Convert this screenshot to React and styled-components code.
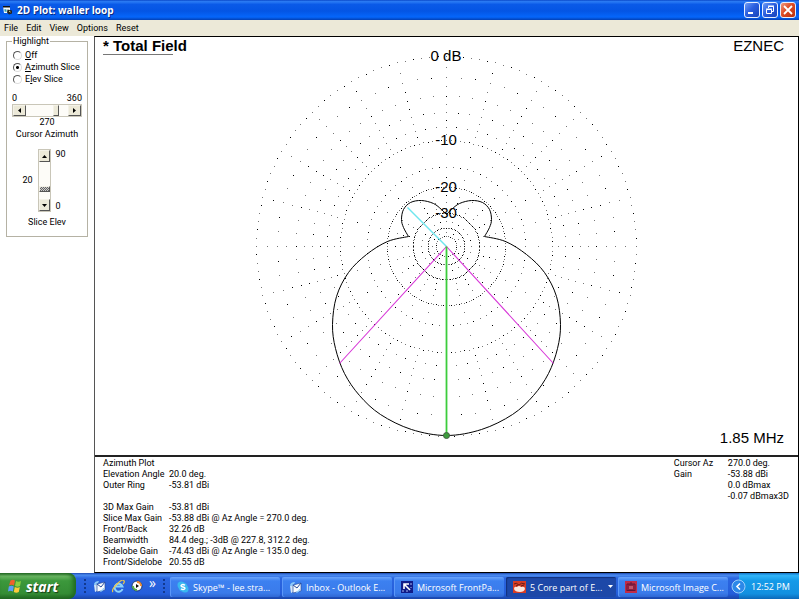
import React, { useState } from "react";
import styled, { createGlobalStyle, css } from "styled-components";

const GlobalStyle = createGlobalStyle`
  * {
    box-sizing: border-box;
  }
  body {
    margin: 0;
    background: #fff;
    color: #000;
    font-family: Roboto, "Liberation Sans", sans-serif;
    font-size: 9px;
    line-height: 11px;
  }
  button, input {
    font: inherit;
    color: inherit;
    margin: 0;
  }
`;

const Page = styled.div`
  display: flex;
  flex-direction: column;
  min-height: 100vh;
  padding: 0 1px 1px 0;
`;

/* ---------- window ---------- */

const TitleBar = styled.header`
  display: flex;
  align-items: center;
  gap: 4px;
  height: 20px;
  padding: 0 3px 0 2px;
  background: linear-gradient(#0a48c8 0%, #2b7cf5 8%, #0a5ae8 22%, #0455e4 55%, #0566fb 85%, #0340b4 100%);
`;

const Title = styled.h1`
  flex: 1;
  margin: 0;
  color: #fff;
  font-family: "Open Sans", sans-serif;
  font-size: 10px;
  font-weight: 700;
  text-shadow: 1px 1px 0 #0a2a80;
`;

const WindowButtons = styled.div`
  display: flex;
  gap: 2px;
`;

const WindowButton = styled.button`
  display: flex;
  width: 16px;
  height: 16px;
  padding: 0;
  border: 1px solid #e6efff;
  border-radius: 3px;
  background: ${(props) =>
    props.$close
      ? "linear-gradient(135deg, #f09a80, #dd4a24 45%, #b8300c)"
      : "linear-gradient(135deg, #6f9cf5, #2a5fe0 45%, #1743b8)"};
`;

const MenuBar = styled.nav`
  display: flex;
  gap: 8px;
  height: 16px;
  padding: 2px 4px;
  background: #ece9d8;
`;

const MenuItem = styled.button`
  padding: 0;
  border: 0;
  background: none;
`;

const Main = styled.main`
  flex: 1;
  display: flex;
`;

/* ---------- side panel ---------- */

const Side = styled.aside`
  width: 94px;
  padding: 0 6px;
`;

const Group = styled.fieldset`
  display: flex;
  flex-direction: column;
  min-width: 0;
  margin: 0;
  padding: 2px 5px 7px;
  border: 1px solid #b5b2a4;
`;

const Legend = styled.legend`
  padding: 0 1px;
`;

const RadioLabel = styled.label`
  display: flex;
  align-items: center;
  gap: 3px;
  height: 12px;
  padding-left: 1px;
`;

const Radio = styled.input`
  appearance: none;
  width: 9px;
  height: 9px;
  border: 1px solid;
  border-color: #555 #ddd #ddd #555;
  border-radius: 50%;
  background: #fff;
  &:checked {
    background: radial-gradient(#000 0 1px, #fff 2px);
  }
`;

const Ends = styled.div`
  display: flex;
  justify-content: space-between;
  margin-top: 8px;
`;

const Caption = styled.label`
  margin-bottom: 1px;
  text-align: center;
`;

const raised = css`
  border: 1px solid;
  border-color: #f4f2e8 #555 #555 #f4f2e8;
  background: #ece9d8;
`;

const ScrollBar = styled.div`
  display: flex;
  flex-direction: ${(props) => (props.$vertical ? "column" : "row")};
  width: ${(props) => (props.$vertical ? "13px" : "100%")};
  height: ${(props) => (props.$vertical ? "63px" : "13px")};
  border: 1px solid #c9c6b8;
`;

const ArrowButton = styled.button`
  ${raised}
  display: flex;
  align-items: center;
  justify-content: center;
  flex: none;
  width: ${(props) => (props.$vertical ? "100%" : "13px")};
  height: ${(props) => (props.$vertical ? "12px" : "100%")};
  padding: 0;
`;

const Range = styled.input`
  appearance: none;
  flex: 1;
  min-width: 0;
  min-height: 0;
  width: 100%;
  height: 100%;
  background: #fdfcf8;
  ${(props) =>
    props.$vertical &&
    css`
      writing-mode: vertical-lr;
      direction: rtl;
    `}
  &::-webkit-slider-runnable-track {
    width: 100%;
    height: 100%;
  }
  &::-webkit-slider-thumb {
    appearance: none;
    ${raised}
    width: ${(props) => (props.$vertical ? "11px" : "6px")};
    height: ${(props) => (props.$vertical ? "6px" : "11px")};
    ${(props) =>
      props.$vertical && "background: repeating-conic-gradient(#666 0 25%, #ccc 0 50%) 0 0 / 2px 2px;"}
  }
`;

const Elevation = styled.div`
  display: grid;
  grid-template-columns: 1fr 13px 1fr;
  column-gap: 5px;
  margin: 8px 0 5px;
  padding-right: 6px;
`;

const Current = styled.output`
  align-self: center;
  text-align: right;
`;

const Limits = styled.div`
  display: flex;
  flex-direction: column;
  justify-content: space-between;
`;

/* ---------- plot ---------- */

const View = styled.section`
  flex: 1;
  display: flex;
  flex-direction: column;
  border: 1px solid #000;
  border-left-color: #555;
`;

const Plot = styled.div`
  flex: 1;
  display: grid;
  grid-template-columns: 1fr 385px 1fr;
  align-items: center;
  font-family: "Liberation Sans", sans-serif;
  font-size: 15px;
  line-height: 17px;
`;

const PlotSide = styled.div`
  display: flex;
  flex-direction: column;
  justify-content: space-between;
  align-self: stretch;
  padding: 0 14px 9px 8px;
  text-align: ${(props) => props.$align};
  white-space: nowrap;
`;

const TraceName = styled.h2`
  width: 70px;
  margin: 0;
  border-bottom: 1px solid #777;
  font-size: 15px;
`;

const Info = styled.section`
  display: flex;
  justify-content: space-between;
  padding: 1px 9px 4px 8px;
  border-top: 2px solid #222;
`;

const InfoTable = styled.table`
  align-self: flex-start;
  border-collapse: collapse;
  th, td {
    height: 11px;
    padding: 0;
    font-weight: 400;
    text-align: left;
    white-space: nowrap;
  }
  th {
    width: ${(props) => props.$label};
  }
`;

/* ---------- taskbar ---------- */

const Taskbar = styled.footer`
  display: flex;
  height: 26px;
  color: #fff;
  background: linear-gradient(#1c48b0 0%, #4b8cf0 8%, #2b66e0 20%, #245edb 80%, #1a45a8 100%);
  font-family: "Open Sans", sans-serif;
`;

const Start = styled.button`
  display: flex;
  align-items: center;
  gap: 4px;
  width: 76px;
  padding: 0 0 0 8px;
  border: 0;
  border-radius: 0 8px 8px 0;
  background: linear-gradient(#2a6a2a, #6cb864 12%, #3c983c 30%, #348c34 80%, #226422);
  box-shadow: inset -3px 0 4px #1f6a20;
  font-size: 14px;
  font-style: italic;
  font-weight: 700;
  text-shadow: 1px 1px 1px #163c16;
`;

const QuickLaunch = styled.div`
  display: flex;
  align-items: center;
  gap: 6px;
  width: 94px;
  padding-left: 7px;
`;

const Grip = styled.span`
  width: 4px;
  height: 17px;
  background: radial-gradient(#12398f 1px, transparent 1px) 0 0 / 4px 4px;
`;

const QuickButton = styled.button`
  display: flex;
  padding: 0;
  border: 0;
  background: none;
`;

const MoreButton = styled(QuickButton)`
  padding-bottom: 7px;
  font-size: 14px;
`;

const Tasks = styled.div`
  flex: 1;
  display: flex;
  gap: 2px;
  min-width: 0;
  padding: 4px 3px 2px 0;
`;

const Task = styled.button`
  flex: 1;
  display: flex;
  align-items: center;
  gap: 4px;
  min-width: 0;
  padding: 0 3px 0 7px;
  border: 0;
  border-radius: 2px;
  background: ${(props) =>
    props.$active ? "#1d48a8" : "linear-gradient(#6aa4fa, #3c80f0 20%, #3a7bea 80%, #2f68d4)"};
  box-shadow: ${(props) => (props.$active ? "inset 1px 1px 1px #12307c" : "inset 1px 0 #5c98f8")};
  white-space: nowrap;
  svg {
    flex: none;
  }
  span {
    flex: 1;
    text-align: left;
  }
`;

const Tray = styled.div`
  display: flex;
  align-items: center;
  gap: 5px;
  width: 68px;
  background: linear-gradient(#1474c8, #30b4f8 10%, #149ae8 30%, #1290e0 80%, #0c68b8) 8px 0 no-repeat;
`;

const TrayToggle = styled.button`
  display: flex;
  padding: 0;
  border: 0;
  border-radius: 50%;
  background: none;
`;

const CENTER = 192;
const RADIUS = 190;

// ARRL log scale
const ringRadius = (db) => RADIUS * Math.pow(0.89, db / 2);

const rings = [
  ...[0, 10, 20, 30].map((db) => ({ db, step: 2.5 })),
  ...[2, 4, 6, 8, 15, 40].map((db) => ({ db, step: 5 })),
  ...[1, 3, 5, 7, 9, 12.5, 17.5, 22.5, 25, 27.5, 35].map((db) => ({ db, step: 15 })),
  { db: 50, step: 12 },
  { db: 45, step: 30 },
];

const dots = rings.flatMap(({ db, step }) => {
  const r = ringRadius(db);
  return Array.from({ length: 360 / step }, (_, i) => {
    const a = (i * step * Math.PI) / 180;
    return {
      x: Math.round(CENTER + r * Math.sin(a)),
      y: Math.round(CENTER - r * Math.cos(a)),
      fill: (i * 7 + Math.round(r)) % 3 ? "#777" : "#000",
    };
  });
});

// right half of the pattern, as offsets from the centre
const backLobe = [
  [0, -32], [5, -37], [13, -43], [25, -46], [36, -44], [43, -37], [45, -27], [43, -19], [38, -10],
];
const mainLobe = [
  [38, -10], [59, -5], [80, 8], [98, 26], [110, 50], [114, 78], [111, 102], [102, 127],
  [87, 149], [66, 168], [35, 183],
];

const mirror = (points) => points.map(([x, y]) => [-x, y]);

const spline = (points) =>
  `M${points[0].join(" ")}` +
  points
    .slice(1)
    .map((p, i) => {
      const a = points[i];
      const before = points[i - 1] || a;
      const after = points[i + 2] || p;
      return `C${a[0] + (p[0] - before[0]) / 6} ${a[1] + (p[1] - before[1]) / 6} ${
        p[0] - (after[0] - a[0]) / 6
      } ${p[1] - (after[1] - a[1]) / 6} ${p[0]} ${p[1]}`;
    })
    .join("");

const pattern = [
  spline(backLobe),
  spline(mirror(backLobe)),
  spline([...mainLobe, [0, 189], ...mirror(mainLobe).reverse()]),
].join("");

const PolarPlot = () => (
  <svg width="385" height="385" viewBox="0 0 385 385" overflow="visible" role="img" aria-label="Azimuth pattern">
    <g shapeRendering="crispEdges">
      {dots.map((dot, i) => (
        <rect key={i} x={dot.x} y={dot.y} width="1" height="1" fill={dot.fill} />
      ))}
    </g>
    <g fill="#000" fontSize="15" textAnchor="middle">
      <text x="192" y="7">0 dB</text>
      <text x="192" y="91">-10</text>
      <text x="192" y="138">-20</text>
      <text x="192" y="164">-30</text>
    </g>
    <g transform="translate(192.5 192.5)" fill="none">
      <path d={pattern} stroke="#000" />
      <path d="M0 0L-39 -39" stroke="#6ee6ee" strokeWidth="1.4" />
      <path d="M0 0L-107 117M0 0L107 117" stroke="#d838d8" strokeWidth="1.1" />
      <path d="M0 0V189" stroke="#3ccc3c" strokeWidth="1.8" />
      <circle cx="0" cy="189" r="3" fill="#3c9c3c" stroke="#466046" />
    </g>
  </svg>
);

const Arrow = ({ turn }) => (
  <svg width="5" height="5" viewBox="0 0 5 5">
    <path d="M0 4h5L2.500 1z" transform={`rotate(${turn} 2.5 2.5)`} />
  </svg>
);

const AppIcon = () => (
  <svg width="11" height="12" viewBox="0 0 11 12">
    <path d="M1 2h7v7H2z" fill="#f4f8fc" />
    <path d="M1 2h7v1.500H1z" fill="#111" />
    <path d="M2.500 5l2 .5v2.500l-2-.5z" fill="#30a0a8" />
    <path d="M5.500 5.500l4.500 1v3l-3 1-2-2z" fill="#222" />
    <path d="M7 7l1.500 1" stroke="#e8e080" />
  </svg>
);

const FlagIcon = () => (
  <svg width="14" height="14" viewBox="0 0 14 14">
    <path d="M2.500 1.500Q5 0 7 1.500L6 6.500Q3.500 5 1 6.500z" fill="#f0602c" />
    <path d="M8 2Q10.500 3.500 13 2l-1 5q-2.500 1.500-5 0z" fill="#8cd040" />
    <path d="M.8 7.500Q3.500 6 5.800 7.500l-1 5Q2.500 11 0 12.500z" fill="#5c9cf8" />
    <path d="M6.800 8Q9.500 9.500 11.800 8l-1 5q-2.500 1.500-5 0z" fill="#fccc3c" />
  </svg>
);

const OutlookIcon = () => (
  <svg width="13" height="13" viewBox="0 0 13 13">
    <path d="M1 5l3-1v7l-2 1z" fill="#d8e8f8" />
    <path d="M4 4l8-2v8l-8 2z" fill="#f8fcff" stroke="#274c9c" strokeWidth=".7" />
    <path d="M4 4l4 3 4-5" fill="none" stroke="#274c9c" />
    <path d="M1 4Q2 1 6 1l-1 2Q3 3 2 6zM11 8q0 3-4 4l1-2q2 0 2-2z" fill="#90ccf8" />
  </svg>
);

const ExplorerIcon = () => (
  <svg width="13" height="13" viewBox="0 0 13 13" fill="none">
    <path d="M10.500 9A4 4 0 1 1 10.500 6.500H4" stroke="#8cd4fc" strokeWidth="2" />
    <path d="M1 12Q-1 10 5 4T12 1Q13 2 11 4" stroke="#f0c848" strokeWidth="1.200" />
  </svg>
);

const MediaIcon = () => (
  <svg width="12" height="12" viewBox="0 0 12 12">
    <circle cx="6" cy="6" r="5" fill="#fff" stroke="#223c70" />
    <path d="M6 1a5 5 0 0 1 5 5H9a3 3 0 0 0-3-3z" fill="#f08c30" />
    <path d="M1 6a5 5 0 0 0 5 5V9a3 3 0 0 1-3-3z" fill="#58b048" />
    <path d="M5 4l3 2-3 2z" fill="#111" />
  </svg>
);

const SkypeIcon = () => (
  <svg width="12" height="12" viewBox="0 0 12 12">
    <circle cx="4" cy="4" r="3.500" fill="#38b8f0" />
    <circle cx="8" cy="8" r="3.500" fill="#38b8f0" />
    <circle cx="6" cy="6" r="4.500" fill="#38b8f0" />
    <path d="M8 4.300Q6 2.700 4.500 4T6 6t1.500 2T4 7.700" fill="none" stroke="#fff" strokeWidth="1.400" />
  </svg>
);

const FrontPageIcon = () => (
  <svg width="12" height="12" viewBox="0 0 12 12">
    <rect width="12" height="12" fill="#101c88" />
    <path d="M3 8V3h5M3.500 3.500L9 9" fill="none" stroke="#fff" strokeWidth="1.600" />
    <path d="M1 10h2M5 10h2M10 2v2M10 6v1" stroke="#a8b8f0" />
  </svg>
);

const ExplorerGroupIcon = () => (
  <svg width="13" height="12" viewBox="0 0 13 12">
    <rect width="13" height="12" fill="#d83c24" />
    <path d="M1 8Q1 5 4 6q2-2 4 0 4-1 4 2-1 3-5 3-5 0-6-3z" fill="#fbe8e0" />
    <path d="M1 3q2-2 5 1 2-3 6-1M3 5l2-1M8 5l3-1" fill="none" stroke="#681c18" />
  </svg>
);

const ImageIcon = () => (
  <svg width="12" height="12" viewBox="0 0 12 12">
    <rect width="12" height="12" fill="#c02c48" />
    <path d="M2 10V3h8v7M4 3v6M6 1v8M8 3v6M2 9.500h8" fill="none" stroke="#5c1438" />
    <path d="M5 5v3M7 5v3" stroke="#f08c98" />
  </svg>
);

const leftRows = [
  ["Azimuth Plot", ""],
  ["Elevation Angle", "20.0 deg."],
  ["Outer Ring", "-53.81 dBi"],
  ["", ""],
  ["3D Max Gain", "-53.81 dBi"],
  ["Slice Max Gain", "-53.88 dBi @ Az Angle = 270.0 deg."],
  ["Front/Back", "32.26 dB"],
  ["Beamwidth", "84.4 deg.; -3dB @ 227.8, 312.2 deg."],
  ["Sidelobe Gain", "-74.43 dBi @ Az Angle = 135.0 deg."],
  ["Front/Sidelobe", "20.55 dB"],
];

const rightRows = [
  ["Cursor Az", "270.0 deg."],
  ["Gain", "-53.88 dBi"],
  ["", "0.0 dBmax"],
  ["", "-0.07 dBmax3D"],
];

const Rows = ({ rows, label }) => (
  <InfoTable $label={label}>
    <tbody>
      {rows.map(([name, value], i) => (
        <tr key={i}>
          <th scope="row">{name}</th>
          <td>{value}</td>
        </tr>
      ))}
    </tbody>
  </InfoTable>
);

const highlights = [
  { id: "off", label: <><u>O</u>ff</> },
  { id: "azimuth", label: <><u>A</u>zimuth Slice</> },
  { id: "elev", label: <>E<u>l</u>ev Slice</> },
];

const tasks = [
  { icon: <SkypeIcon />, text: "Skype™ - lee.stra..." },
  { icon: <OutlookIcon />, text: "Inbox - Outlook E..." },
  { icon: <FrontPageIcon />, text: "Microsoft FrontPa..." },
  { icon: <ExplorerGroupIcon />, text: "5 Core part of E...", active: true },
  { icon: <ImageIcon />, text: "Microsoft Image C..." },
];

const App = () => {
  const [highlight, setHighlight] = useState("azimuth");
  const [azimuth, setAzimuth] = useState(270);
  const [elev, setElev] = useState(20);

  return (
    <Page>
      <GlobalStyle />
      <TitleBar>
        <AppIcon />
        <Title>2D Plot: waller loop</Title>
        <WindowButtons>
          <WindowButton aria-label="Minimize">
            <svg width="14" height="14"><path d="M3 10h5" stroke="#fff" strokeWidth="2" /></svg>
          </WindowButton>
          <WindowButton aria-label="Restore">
            <svg width="14" height="14" fill="none" stroke="#fff">
              <path d="M5.500 5V3.500h5v5H9M3.500 6.500h5v4h-5zM3 6h6M5 3h6" />
            </svg>
          </WindowButton>
          <WindowButton $close aria-label="Close">
            <svg width="14" height="14"><path d="M3 3l8 8M11 3l-8 8" stroke="#fff" strokeWidth="1.800" /></svg>
          </WindowButton>
        </WindowButtons>
      </TitleBar>
      <MenuBar>
        {["File", "Edit", "View", "Options", "Reset"].map((item) => (
          <MenuItem key={item}>{item}</MenuItem>
        ))}
      </MenuBar>
      <Main>
        <Side>
          <Group>
            <Legend>Highlight</Legend>
            {highlights.map(({ id, label }) => (
              <RadioLabel key={id}>
                <Radio
                  type="radio"
                  name="highlight"
                  checked={highlight === id}
                  onChange={() => setHighlight(id)}
                />
                <span>{label}</span>
              </RadioLabel>
            ))}
            <Ends>
              <span>0</span>
              <span>360</span>
            </Ends>
            <ScrollBar>
              <ArrowButton aria-label="Azimuth down" onClick={() => setAzimuth(azimuth - 1)}>
                <Arrow turn={-90} />
              </ArrowButton>
              <Range
                id="azimuth"
                type="range"
                max="360"
                value={azimuth}
                onChange={(e) => setAzimuth(Number(e.target.value))}
              />
              <ArrowButton aria-label="Azimuth up" onClick={() => setAzimuth(azimuth + 1)}>
                <Arrow turn={90} />
              </ArrowButton>
            </ScrollBar>
            <Caption as="output">{azimuth}</Caption>
            <Caption htmlFor="azimuth">Cursor Azimuth</Caption>
            <Elevation>
              <Current>{elev}</Current>
              <ScrollBar $vertical>
                <ArrowButton $vertical aria-label="Elevation up" onClick={() => setElev(elev + 1)}>
                  <Arrow turn={0} />
                </ArrowButton>
                <Range
                  $vertical
                  id="elev"
                  type="range"
                  max="90"
                  value={elev}
                  onChange={(e) => setElev(Number(e.target.value))}
                />
                <ArrowButton $vertical aria-label="Elevation down" onClick={() => setElev(elev - 1)}>
                  <Arrow turn={180} />
                </ArrowButton>
              </ScrollBar>
              <Limits>
                <span>90</span>
                <span>0</span>
              </Limits>
            </Elevation>
            <Caption htmlFor="elev">Slice Elev</Caption>
          </Group>
        </Side>
        <View>
          <Plot>
            <PlotSide $align="left">
              <TraceName>* Total Field</TraceName>
            </PlotSide>
            <PolarPlot />
            <PlotSide $align="right">
              <span>EZNEC</span>
              <span>1.85 MHz</span>
            </PlotSide>
          </Plot>
          <Info>
            <Rows rows={leftRows} label="66px" />
            <Rows rows={rightRows} label="54px" />
          </Info>
        </View>
      </Main>
      <Taskbar>
        <Start>
          <FlagIcon />
          start
        </Start>
        <QuickLaunch>
          <Grip />
          <QuickButton aria-label="Outlook Express"><OutlookIcon /></QuickButton>
          <QuickButton aria-label="Internet Explorer"><ExplorerIcon /></QuickButton>
          <QuickButton aria-label="Media Player"><MediaIcon /></QuickButton>
          <MoreButton>»</MoreButton>
          <Grip />
        </QuickLaunch>
        <Tasks>
          {tasks.map(({ icon, text, active }) => (
            <Task key={text} $active={active}>
              {icon}
              <span>{text}</span>
              {active && (
                <svg width="5" height="4"><path d="M0 0h5L2.500 3z" fill="#fff" /></svg>
              )}
            </Task>
          ))}
        </Tasks>
        <Tray>
          <TrayToggle aria-label="Show hidden icons">
            <svg width="15" height="15" viewBox="0 0 15 15" fill="none">
              <circle cx="7.500" cy="7.500" r="6.500" fill="#2c88e8" stroke="#9cd0fc" />
              <path d="M9 4.500l-3 3 3 3" stroke="#fff" strokeWidth="1.600" />
            </svg>
          </TrayToggle>
          <span>12:52 PM</span>
        </Tray>
      </Taskbar>
    </Page>
  );
};

export default App;
